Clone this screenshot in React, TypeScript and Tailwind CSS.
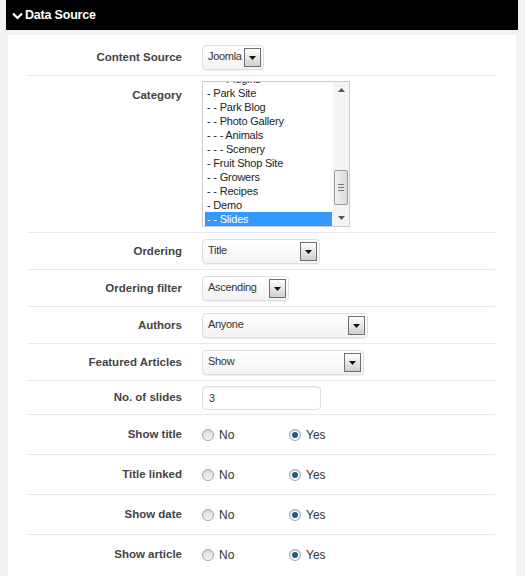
import React from "react";

const FONT = { fontFamily: '"Liberation Sans", Arial, sans-serif' };

const categories = [
  "- - - Plugins",
  "- Park Site",
  "- - Park Blog",
  "- - Photo Gallery",
  "- - - Animals",
  "- - - Scenery",
  "- Fruit Shop Site",
  "- - Growers",
  "- - Recipes",
  "- Demo",
  "- - Slides",
];

const Arrow: React.FC = () => (
  <span className="flex h-[19px] w-[17px] shrink-0 items-center justify-center border border-[#6f6f6f] bg-linear-to-b from-white to-[#cfcfcf]">
    <svg width="7" height="4" viewBox="0 0 7 4">
      <path d="M0 0h7L3.5 4z" fill="#111" />
    </svg>
  </span>
);

const Select: React.FC<{ value: string; width: string }> = ({ value, width }) => (
  <div
    className={`flex h-[25px] items-center justify-between rounded-[4px] border border-[#dedede] bg-linear-to-b from-white to-[#f3f3f3] pl-[5px] pr-[2px] shadow-[0_1px_1px_rgba(0,0,0,0.06)] ${width}`}
  >
    <span className="-mt-[2px] whitespace-nowrap text-[11px] leading-none tracking-[-0.3px] text-[#333]">
      {value}
    </span>
    <Arrow />
  </div>
);

const Radio: React.FC<{ checked?: boolean }> = ({ checked }) => (
  <span className="flex h-[12px] w-[12px] items-center justify-center rounded-full border border-[#a3a3a3] bg-linear-to-b from-[#d6d6d6] to-[#fafafa]">
    {checked ? (
      <span className="flex h-[8px] w-[8px] items-center justify-center rounded-full bg-white">
        <span className="h-[6px] w-[6px] rounded-full bg-[#1d5b86]" />
      </span>
    ) : null}
  </span>
);

const Label: React.FC<{ children: React.ReactNode; top?: boolean }> = ({ children, top }) => (
  <div
    className={`w-[155px] shrink-0 text-right text-[11.5px] font-bold text-[#444] ${top ? "pt-[6px]" : ""}`}
  >
    {children}
  </div>
);

const Row: React.FC<{ className?: string; children: React.ReactNode; last?: boolean }> = ({
  className = "",
  children,
  last,
}) => (
  <div className={`flex gap-[20px] ${last ? "" : "border-b border-[#e9e9e9]"} ${className}`}>
    {children}
  </div>
);

const YesNo: React.FC<{ label: string; last?: boolean }> = ({ label, last }) => (
  <Row className="h-[40px] items-center" last={last}>
    <Label>{label}</Label>
    <div className="flex items-center text-[12px] text-[#333]">
      <div className="flex w-[87px] items-center gap-[5px]">
        <Radio />
        <span>No</span>
      </div>
      <div className="flex items-center gap-[5px]">
        <Radio checked />
        <span>Yes</span>
      </div>
    </div>
  </Row>
);

const CategoryList: React.FC = () => (
  <div className="flex h-[146px] w-[148px] overflow-hidden border border-[#cdcdcd] bg-white">
    <div className="flex-1 overflow-hidden">
      <div className="-mt-[10px] pl-[2px] pr-[1px]">
        {categories.map((c, i) => {
          const selected = i === categories.length - 1;
          return (
            <div
              key={c}
              className={`h-[14px] pl-[2px] text-[11px] leading-[14px] tracking-[-0.2px] ${
                selected ? "bg-[#3399ff] text-white" : "text-[#222]"
              }`}
            >
              {c}
            </div>
          );
        })}
      </div>
    </div>
    {/* scrollbar */}
    <div className="flex w-[16px] flex-col bg-[#f4f4f4]">
      <div className="flex h-[16px] items-center justify-center">
        <svg width="7" height="4" viewBox="0 0 7 4">
          <path d="M0 4h7L3.5 0z" fill="#555" />
        </svg>
      </div>
      <div className="flex-1 px-[1px] pt-[72px]">
        <div className="flex h-[35px] flex-col items-center justify-center gap-[2px] rounded-[2px] border border-[#9a9a9a] bg-linear-to-r from-[#f0f0f0] to-[#dcdcdc]">
          <span className="h-px w-[6px] bg-[#777]" />
          <span className="h-px w-[6px] bg-[#777]" />
          <span className="h-px w-[6px] bg-[#777]" />
        </div>
      </div>
      <div className="flex h-[16px] items-center justify-center">
        <svg width="7" height="4" viewBox="0 0 7 4">
          <path d="M0 0h7L3.5 4z" fill="#555" />
        </svg>
      </div>
    </div>
  </div>
);

export default function App() {
  return (
    <div className="h-[576px] w-[525px] overflow-hidden bg-[#f2f2f2]" style={FONT}>
      <div className="ml-[6px] flex h-[30px] w-[512px] items-center gap-[2px] bg-black pl-[6px] text-white">
        <svg width="11" height="8" viewBox="0 0 11 8" className="mt-px">
          <path d="M1 1.5l4.5 4.5L10 1.5" fill="none" stroke="#fff" strokeWidth="2.2" />
        </svg>
        <span className="text-[12.5px] font-bold tracking-[-0.2px]">Data Source</span>
      </div>

      <div className="ml-[8px] mt-[5px] h-[541px] w-[508px] bg-white">
        <div className="ml-[19px] w-[468px]">
          <Row className="items-center pb-[5px] pt-[10px]">
            <Label>Content Source</Label>
            <Select value="Joomla" width="w-[62px]" />
          </Row>
          <Row className="py-[5px]">
            <Label top>Category</Label>
            <CategoryList />
          </Row>
          <Row className="items-center pb-[5px] pt-[6px]">
            <Label>Ordering</Label>
            <Select value="Title" width="w-[118px]" />
          </Row>
          <Row className="items-center pb-[5px] pt-[6px]">
            <Label>Ordering filter</Label>
            <Select value="Ascending" width="w-[87px]" />
          </Row>
          <Row className="items-center pb-[5px] pt-[6px]">
            <Label>Authors</Label>
            <Select value="Anyone" width="w-[166px]" />
          </Row>
          <Row className="items-center pb-[5px] pt-[6px]">
            <Label>Featured Articles</Label>
            <Select value="Show" width="w-[162px]" />
          </Row>
          <Row className="items-center pb-[4px] pt-[5px]">
            <Label>No. of slides</Label>
            <div className="flex h-[24px] w-[119px] items-center rounded-[4px] border border-[#dedede] bg-white pl-[6px] text-[11px] text-[#333] shadow-[inset_0_1px_1px_rgba(0,0,0,0.05)]">
              3
            </div>
          </Row>
          <YesNo label="Show title" />
          <YesNo label="Title linked" />
          <YesNo label="Show date" />
          <YesNo label="Show article" last />
        </div>
      </div>
    </div>
  );
}
